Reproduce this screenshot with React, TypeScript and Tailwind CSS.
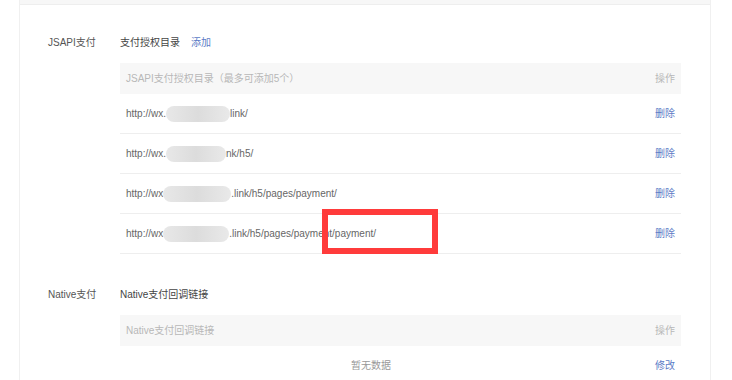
const font = { fontFamily: '"Liberation Sans", "Noto Sans CJK SC", sans-serif' };

interface Row {
  head: string;
  blur: number;
  tail: string;
}

const rows: Row[] = [
  { head: 'http://wx.', blur: 64, tail: 'link/' },
  { head: 'http://wx.', blur: 60, tail: 'nk/h5/' },
  { head: 'http://wx', blur: 68, tail: '.link/h5/pages/payment/' },
  { head: 'http://wx', blur: 66, tail: '.link/h5/pages/payment/payment/' },
];

function Blur({ w }: { w: number }) {
  return (
    <span
      className="inline-block h-[16px] rounded-[8px] bg-gradient-to-r from-[#e8e8e8] via-[#dcdcdc] to-[#e9e9e9] align-middle"
      style={{ width: w }}
    />
  );
}

function TableHead({ title }: { title: string }) {
  return (
    <div className="flex h-[31px] items-center justify-between bg-[#f7f7f7] px-[6px] text-[#b8b8b8]">
      <span>{title}</span>
      <span>操作</span>
    </div>
  );
}

export default function App() {
  return (
    <div className="h-[380px] w-[732px] overflow-hidden bg-white text-[10px]" style={font}>
      <div className="ml-[19px] h-full w-[692px] border-x border-[#f0f0f0]">
        <div className="h-[5px] border-b border-[#eeeeee] bg-[#f7f7f7]" />
        <div className="pl-[28px] pr-[29px] pt-[28px]">
          {/* JSAPI */}
          <div className="flex h-[18px] items-center">
            <span className="w-[72px] text-[#555]">JSAPI支付</span>
            <span className="text-[#444]">支付授权目录</span>
            <span className="ml-[11px] text-[#5b7bc6]">添加</span>
          </div>
          <div className="ml-[72px] mt-[12px]">
            <TableHead title="JSAPI支付授权目录（最多可添加5个）" />
            {rows.map((r, i) => (
              <div
                key={i}
                className="relative flex h-[40px] items-center justify-between border-b border-[#eeeeee] px-[6px] text-[#666]"
              >
                <span className="flex items-center">
                  <span>{r.head}</span>
                  <Blur w={r.blur} />
                  <span>{r.tail}</span>
                </span>
                <span className="text-[#5b7bc6]">删除</span>
                {i === 3 && (
                  <div className="absolute left-[202px] top-[-5px] h-[45px] w-[116px] border-[6px] border-[#ff3b3b]" />
                )}
              </div>
            ))}
          </div>

          {/* Native */}
          <div className="mt-[31px] flex h-[18px] items-center">
            <span className="w-[72px] text-[#555]">Native支付</span>
            <span className="text-[#444]">Native支付回调链接</span>
          </div>
          <div className="ml-[72px] mt-[12px]">
            <TableHead title="Native支付回调链接" />
            <div className="flex h-[38px] items-center">
              <span className="w-[502px] text-center text-[#999]">暂无数据</span>
              <span className="flex-1 pr-[6px] text-right text-[#5b7bc6]">修改</span>
            </div>
          </div>
        </div>
      </div>
    </div>
  );
}
